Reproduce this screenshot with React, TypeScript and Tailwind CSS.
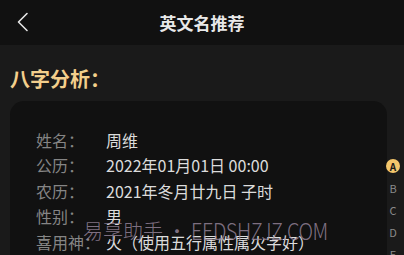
const rows = [
  { label: '姓名：', value: '周维' },
  { label: '公历：', value: '2022年01月01日 00:00' },
  { label: '农历：', value: '2021年冬月廿九日 子时' },
  { label: '性别：', value: '男' },
  { label: '喜用神：', value: '火（使用五行属性属火字好）' },
  { label: '日主：', value: '丙火' },
];

const letters = ['B', 'C', 'D', 'E'];

export default function App() {
  return (
    <div
      className="relative h-[255px] w-[404px] overflow-hidden bg-[#1a1a1a]"
      style={{ fontFamily: '"Noto Sans CJK SC", "Noto Sans", sans-serif' }}
    >
      {/* Header */}
      <div className="relative flex h-[45px] items-center justify-center bg-[#111111]">
        <svg
          className="absolute left-[16px] top-[12px]"
          width="13"
          height="20"
          viewBox="0 0 13 20"
          fill="none"
          stroke="#e5e5e5"
          strokeWidth="1.6"
          strokeLinecap="round"
          strokeLinejoin="round"
        >
          <path d="M11 1.5 L2.5 10 L11 18.5" />
        </svg>
        <span className="text-[17px] font-bold text-[#e8e8e8]">英文名推荐</span>
      </div>

      <div className="pl-[10px] pr-[17px]">
        <div className="mt-[21px] text-[20px] font-bold leading-[26px] text-[#f3cf8c]">八字分析：</div>

        <div className="mt-[9px] rounded-[14px] bg-[#111111] pl-[26px] pt-[26px]">
          {rows.map((r) => (
            <div key={r.label} className="flex h-[25.5px] items-center text-[16px]">
              <span className="w-[70px] text-[#858585]">{r.label}</span>
              <span className="text-[#dcdcdc]">{r.value}</span>
            </div>
          ))}
        </div>
      </div>

      {/* Alphabet index */}
      <div className="absolute left-[386px] top-[159px] flex w-[14px] flex-col items-center text-[11px] text-[#8a8a8a]">
        <div className="flex h-[14px] w-[14px] items-center justify-center rounded-full bg-[#f3c66b] text-[10px] font-bold text-[#1a1a1a]">
          A
        </div>
        {letters.map((l) => (
          <div key={l} className="mt-[8px] flex h-[14px] items-center">
            {l}
          </div>
        ))}
      </div>

      {/* Watermark */}
      <div className="pointer-events-none absolute left-[83px] top-[217px] flex items-center whitespace-nowrap text-[20px] font-light leading-[28px] text-[#9c8aa0]/80">
        <span>易享助手</span>
        <span className="mx-[4px]">•</span>
        <span className="origin-left scale-y-[1.15] tracking-[-0.5px]">EEDSHZJZ.COM</span>
      </div>
    </div>
  );
}
